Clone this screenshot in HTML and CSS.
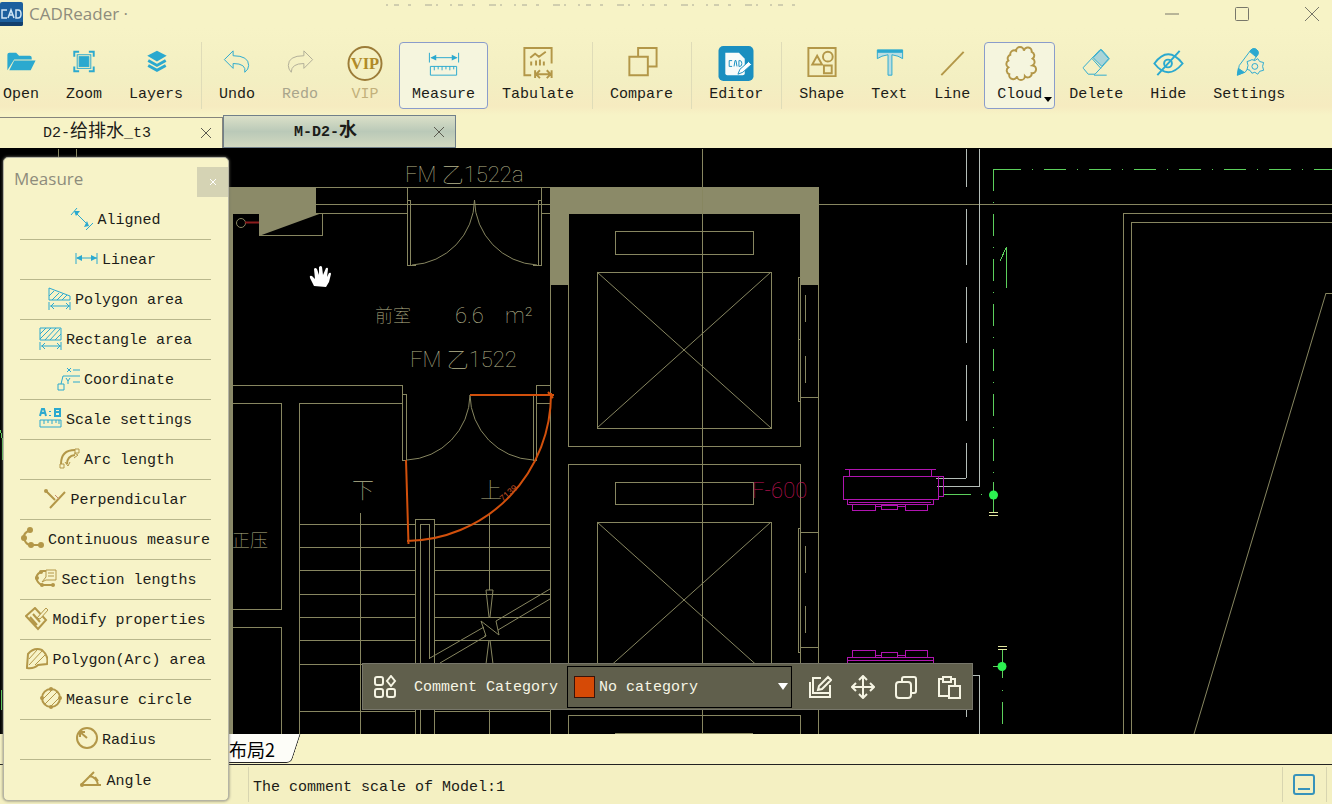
FILE: index.html
```html
<!DOCTYPE html>
<html lang="en">
<head>
    <meta charset="UTF-8">
    <meta name="viewport" content="width=device-width, initial-scale=1.0">
    <title>CADReader</title>
    <link rel="stylesheet" href="styles.css">
</head>
<body>
<div class="app">
    <header class="titlebar">
        <svg class="logo" viewBox="0 0 23 24"><rect width="23" height="24" rx="2" fill="#1c5f9e"/><path d="M0 20h23v2q0 2-2 2H0z" fill="#123f6e"/><path d="M7 8H2v8h5M8 16l3-8 3 8M9 13h4M16 8v8h2q3 0 3-4t-3-4z" fill="none" stroke="#cfe6f5" stroke-width="1.500"/></svg>
        <span class="app-name">CADReader ·</span>
        <svg class="dots" viewBox="0 0 420 2" aria-hidden="true"><path d="M2 1h418" stroke="#a9a897" stroke-width="1" stroke-dasharray="2 6 5 9 3 14 7 4 2 12"/></svg>
        <div class="window-buttons">
            <button aria-label="Minimize"><svg viewBox="0 0 16 16"><path d="M1 8h14"/></svg></button>
            <button aria-label="Maximize"><svg viewBox="0 0 16 16"><rect x="1.500" y="1.500" width="13" height="13" rx="1"/></svg></button>
            <button aria-label="Close"><svg viewBox="0 0 16 16"><path d="M1 1l14 14M15 1L1 15"/></svg></button>
        </div>
    </header>

    <nav class="toolbar">
        <button class="tool"><svg class="blue" viewBox="0 0 36 36"><path d="M4 25V9q0-2 2-2h7l3 3h11q2 0 2 2v2H11z" fill="#2ba9cf" stroke="none"/><path d="M11 15h22l-5 10H6z" fill="#2ba9cf" stroke="none"/></svg>Open</button>
        <button class="tool"><svg class="blue" viewBox="0 0 36 36"><rect x="11" y="9" width="14" height="14"/><rect x="13" y="11" width="10" height="10" fill="#2ba9cf"/><path d="M8 11V6h5M23 6h5v5M28 21v5h-5M13 26H8v-5" stroke-width="2"/></svg>Zoom</button>
        <button class="tool"><svg class="blue" viewBox="0 0 36 36"><path d="M19 5l10 5-10 6-10-6z" fill="#2ba9cf" stroke="none"/><path d="M10 15l9 5 9-5M10 20l9 5 9-5" stroke-width="3"/></svg>Layers</button>
        <span class="sep"></span>
        <button class="tool"><svg class="blue" viewBox="0 0 36 36"><path d="M5 14l9-9v5q16 0 16 10 0 4-4 7 2-9-12-9v5z"/></svg>Undo</button>
        <button class="tool muted"><svg class="grey" viewBox="0 0 36 36"><path d="M31 14l-9-9v5Q6 10 6 20q0 4 3 7 0-9 13-9v5z"/></svg>Redo</button>
        <button class="tool muted vip"><svg viewBox="0 0 36 36"><circle cx="18" cy="18" r="17" fill="none" stroke="#9c7c38" stroke-width="2"/><text x="18" y="24" class="vip-text">VIP</text></svg>VIP</button>
        <button class="tool selected"><svg class="blue" viewBox="0 0 36 36"><path d="M3 7v10M33 7v10M5 12h26M4 21h27v9H4zM8 21v4M12 21v3M16 21v4M20 21v3M24 21v4M28 21v3"/><path d="M4 12l6-3v6zM32 12l-6-3v6z" fill="#2ba9cf" stroke="none"/></svg>Measure</button>
        <button class="tool"><svg class="gold" viewBox="0 0 36 36"><path d="M11 30H4V2h28v16M15 25v8M32 25v8M17 29h13M20 25l-4 4 4 4M27 25l4 4-4 4M10 12l5-4 4 3 7-5M11 20v-4M16 20v-5M20 20v-6M24 20v-4" stroke-width="2"/></svg>Tabulate</button>
        <span class="sep"></span>
        <button class="tool"><svg class="gold" viewBox="0 0 36 36"><path d="M14 11V2h19v19h-9M5 11h19v19H5z" stroke-width="2"/></svg>Compare</button>
        <span class="sep"></span>
        <button class="tool"><svg viewBox="0 0 36 36"><rect width="36" height="36" rx="5" fill="#1a8fc0"/><path d="M7 7h14l6 6v15q0 2-2 2H9q-2 0-2-2z" fill="#f7fbfa"/><path d="M14 15h-3v6h3M16 21l1-6h1l1 6M21 15v6h1q2 0 2-3t-2-3z" fill="none" stroke="#1a8fc0"/><path d="M20 29l2-5 9-8 3 3-9 8z" fill="#fff" stroke="#1a8fc0"/></svg>Editor</button>
        <span class="sep"></span>
        <button class="tool"><svg class="gold" viewBox="0 0 36 36"><path d="M4 2h28v29H4zM13 10l5 9H8zM20 20h8v8h-8z" stroke-width="2"/><circle cx="24" cy="11" r="5" stroke-width="2"/></svg>Shape</button>
        <button class="tool"><svg class="blue" viewBox="0 0 36 36"><path d="M6 4h26v9q-4-3-11-4v21h-4V9q-7 1-11 4z" fill="#b9dde0"/><path d="M6 4h26v3H6z" fill="#2ba9cf" stroke="none"/></svg>Text</button>
        <button class="tool"><svg class="gold" viewBox="0 0 36 36"><path d="M7 30L30 6" stroke-width="2"/></svg>Line</button>
        <button class="tool selected cloud"><svg class="gold" viewBox="0 0 36 36"><path d="M8 9a4 4 0 0 1 6-4a4 4 0 0 1 8 0a4 4 0 0 1 8 1a4 4 0 0 1 1 7a4 4 0 0 1 0 7a4 4 0 0 1-1 8a4 4 0 0 1-7 3a4 4 0 0 1-8 0a4 4 0 0 1-8-2a4 4 0 0 1-1-7a4 4 0 0 1 0-7a4 4 0 0 1 2-6z" stroke-width="2"/></svg>Cloud<svg class="caret" viewBox="0 0 8 5"><path d="M0 0h8L4 5z"/></svg></button>
        <button class="tool"><svg class="blue" viewBox="0 0 36 36"><path d="M5 22L22 4q1-1 2 0l7 8q1 1 0 2L17 29h-7l-5-6zM14 13l9 10M16 30h13"/><path d="M15 12l8-8 8 9-7 8z" fill="#a9d4d8"/></svg>Delete</button>
        <button class="tool"><svg class="blue" viewBox="0 0 36 36"><path d="M4 18q14-19 29 0-15 18-29 0zM30 5L7 30" stroke-width="2"/><circle cx="18" cy="18" r="4" stroke-width="2"/></svg>Hide</button>
        <button class="tool"><svg class="blue" viewBox="0 0 36 36"><path d="M6 30l2-10L20 4q4-3 7 1 1 2 0 4L14 27z"/><path d="M20 4q4-3 7 1 1 2 0 4l-2 2-6-5zM6 30l1-7 6 4z" fill="#2ba9cf"/><path d="M21 14l3 1 3-2 2 3 4 1-1 4 1 4-4 1-2 3-3-2-3 1-2-3-3-1 1-4-1-4 3-1z" fill="#f3efca"/><circle cx="24" cy="21" r="3"/></svg>Settings</button>
    </nav>

    <div class="tabs">
        <div class="tab">
            <button class="tab-label">D2-<span class="han">给排水</span>_t3</button>
            <button class="tab-close" aria-label="Close D2-给排水_t3"><svg viewBox="0 0 12 12"><path d="M1 1l10 10M11 1L1 11"/></svg></button>
        </div>
        <div class="tab active">
            <button class="tab-label">M-D2-<span class="han">水</span></button>
            <button class="tab-close" aria-label="Close M-D2-水"><svg viewBox="0 0 12 12"><path d="M1 1l10 10M11 1L1 11"/></svg></button>
        </div>
    </div>

    <main class="canvas">
        <svg class="drawing" viewBox="0 149 1332 585" preserveAspectRatio="xMinYMin slice">
            <!-- walls -->
            <path class="wall" d="M229 187h87v26h6l-63 23v-22h-26v520h-4zM550 187h269v98h-19v-71H569v71h-19z"/>
            <g class="line crisp">
                <!-- lobby door -->
                <path d="M58.500 149v10M76.500 149v10M316 187.500h234M316 204.500h234M316 213.500h91M259 235.500h63v-22M541 213.500h9M407.500 187v78h8M407 200.500h3.500v65M541.500 187v78h-9M541 200.500h-2.500v65"/>
                <!-- grid axes -->
                <path d="M702.500 149v585M819 204.500h513"/>
                <!-- rooms on the left -->
                <path d="M233 385.500h169.500v75h4v-66h-4M233 403.500h48.500v206H233M233 627.500h48.500v107M299.500 734V403.500h103M550 385.500h-13.500v75h-3v-66M536 403.500h14"/>
                <!-- stairs -->
                <path d="M299 524.500h116M299 547.500h116M299 570.500h116M299 594.500h116M299 617.500h116M299 640.500h116M299 664.500h116M299 711.500h116M434 524.500h116M434 547.500h116M434 570.500h116M434 594.500h116M434 617.500h116M434 640.500h116M434 711.500h116"/>
                <path d="M415.500 734V519.500h19v214M420.500 734V524.500h9v134M360.500 513v221M489.500 513v77M550.500 285v449M489.500 664v70"/>
                <!-- lifts -->
                <path d="M568.500 285v161h232V285M568.500 697V464.500h232V697zM568.500 734v-18.500h232V734M818.500 285v449M615.500 231.500h138v23h-138zM615.500 482.500h138v22h-138zM615 733.500h138M597.500 272.500h174v156h-174zM597.500 522.500h174v156h-174z"/>
                <path d="M801 277.500h-2.500v124h2M798 339.500h3M801 397.500h17M805.500 295v27M805.500 356v27M801 528.500h-2.500v124h2M801 532.500h17M801 647.500h17M805.500 546v27M805.500 606v27"/>
                <!-- hall on the right -->
                <path d="M1123.500 734V213.500H1332M1131.500 734V222.500H1332M1332 293.500h-6"/>
            </g>
            <g class="line">
                <circle cx="241" cy="223" r="4.500"/>
                <path d="M474.500 200A66 66 0 0 1 412 265M474.500 200A66 66 0 0 0 537 265M470 395A66 66 0 0 1 407 460M470 395A66 66 0 0 0 533 460"/>
                <path d="M597 272l174 156M771 272L597 428M597 522l174 156M771 522L597 678"/>
                <path d="M430 658l54-31M440 663l46-27M496 621l54-32M498 630l52-31M484 636h2l-5-15 18 14-3-14M486 590h7l-3 27h-1zM489 640l-3 24M490 640l3 24M1326 293L1194 734"/>
            </g>
            <g class="pale crisp">
                <path d="M966.500 149v329" stroke-dasharray="38 22 56 22 56 22 56 22 56 22"/>
                <path d="M966 478.500h-30M979.500 149v337.500H937M973 675.500h6.500V734M966.500 710v7"/>
            </g>
            <g class="green crisp">
                <path d="M993 169.500h28M1032 169.500h1"/>
                <path d="M1044 169.500h288M993.500 169v313" stroke-dasharray="22 11 1 11"/>
                <path d="M1006.500 247v41M1000 261l6-13M943 494.500h28M981 494.500h1M993.500 482v30M1002.500 649v29M993 666.500h9M1002.500 690v1M1002.500 702v22M0 430q4 10 2 30M1.500 690v20"/>
            </g>
            <path class="bars crisp" d="M989 512.500h9M989 515.500h9M998 646.500h9M998 649.500h9"/>
            <circle class="node" cx="993.500" cy="495" r="4.500"/>
            <circle class="node" cx="1002" cy="666.500" r="4.500"/>
            <!-- fan coil units -->
            <g class="magenta crisp">
                <path d="M845 469.500h91M849.500 469v7M931.500 469v7M843.500 476.500h95v23h-95zM938.500 476.500h5v20h-5M847.500 500v4h86v-4M849 502.500h82M852.500 504.500h23v6h-23zM905.500 504.500h22v6h-22zM881.500 505.500h16v4h-16zM876 506.500h5M898 506.500h7"/>
                <path d="M852.500 650.500h23v7h-23zM905.500 650.500h22v7h-22zM881.500 652.500h16v5h-16zM876 655.500h5M898 655.500h7M847.500 664v-6.500h86v6.500M847 660.500h86M843 663.500h95"/>
            </g>
            <path d="M245 222.500h14" stroke="#8c1c1c" stroke-width="2"/>
            <!-- drawing labels -->
            <g class="labels">
                <text x="405" y="182">FM 乙1522a</text>
                <text x="410" y="367">FM 乙1522</text>
                <text x="375" y="322" class="small">前室</text>
                <text x="455" y="323">6.6</text>
                <text x="505" y="323">m²</text>
                <text x="232" y="547" class="small">正压</text>
                <text x="352" y="498">下</text>
                <text x="480" y="498">上</text>
                <text x="752" y="498" class="unit">F-600</text>
            </g>
            <!-- measured arc -->
            <path class="measured" d="M406 460l2.500 84M470 395h84M551 393A146 147 0 0 1 407 541M548 392l5 6"/>
            <text class="arc-value" transform="translate(503 502) rotate(-42)">7139</text>
            <!-- pan cursor -->
            <path d="M314 286l-4-8q-1-3 2-2l3 3-1-10q1-2 3 0l2 6v-8q2-2 3 0l1 8 3-7q2-1 2 1l-1 8 2-4q2-1 2 1l-2 8-3 5z" fill="#fff"/>
        </svg>

        <div class="comment-bar">
            <button aria-label="Categories"><svg viewBox="0 0 24 24"><rect x="2" y="2" width="8" height="8" rx="2"/><rect x="2" y="14" width="8" height="8" rx="2"/><rect x="14" y="14" width="8" height="8" rx="2"/><path d="M18 1l4 5-4 5-4-5z"/></svg></button>
            <label for="category">Comment Category</label>
            <div class="select-box">
                <span class="swatch"></span>
                <select id="category"><option>No category</option></select>
                <svg class="arrow" viewBox="0 0 10 7"><path d="M0 0h10L5 7z"/></svg>
            </div>
            <button aria-label="Edit"><svg viewBox="0 0 24 24"><path d="M13 3H5v15h17v-8M2 7v15h20v-4M20 2l3 3-9 9-4 1 1-4z"/></svg></button>
            <button aria-label="Move"><svg viewBox="0 0 24 24"><path d="M12 2v20M2 12h20M8 5l4-4 4 4M8 19l4 4 4-4M5 8l-4 4 4 4M19 8l4 4-4 4"/></svg></button>
            <button aria-label="Copy"><svg viewBox="0 0 24 24"><rect x="2" y="7" width="15" height="16" rx="3"/><path d="M8 7V4q0-2 2-2h10q2 0 2 2v12q0 2-2 2h-3"/></svg></button>
            <button aria-label="Paste"><svg viewBox="0 0 24 24"><path d="M12 21H2V4h4M14 4h4v7M6 2h8v5H6zM12 11h11v12H12z"/></svg></button>
        </div>
    </main>

    <div class="layout-tabs">
        <button class="layout-tab">布局2</button>
    </div>

    <footer class="statusbar">
        <span class="status-text">The comment scale of Model:1</span>
        <button class="status-button" aria-label="Command window"><svg viewBox="0 0 22 22"><rect x="1" y="1" width="20" height="19" rx="2"/><path d="M5 15h12"/></svg></button>
    </footer>

    <aside class="measure-panel">
        <div class="panel-head">
            <h2>Measure</h2>
            <button class="panel-close" aria-label="Close panel"><svg viewBox="0 0 8 8"><path d="M1 1l6 6M7 1L1 7"/></svg></button>
        </div>
        <ul>
            <li><button><svg class="blue" viewBox="0 0 23 24"><path d="M1 8l6-7M16 23l7-7M5 5l13 13"/><path d="M4 4h6l-4 5zM19 19l-5 1 3-6z" fill="#2ba9cf" stroke="none"/></svg>Aligned</button></li>
            <li><button><svg class="blue" viewBox="0 0 23 24"><path d="M1 6v11M22 6v11M2 11h20"/><path d="M1 11l6-3v6zM22 11l-6-3v6z" fill="#2ba9cf" stroke="none"/></svg>Linear</button></li>
            <li><button><svg class="blue" viewBox="0 0 23 24"><path d="M1 1l21 8v4H1zM1 9l5-5M4 13l7-7M9 13l6-6M14 13l5-5M1 15v8M22 15v8M2 19h20M6 16l-3 3 3 3M18 16l3 3-3 3"/></svg>Polygon area</button></li>
            <li><button><svg class="blue" viewBox="0 0 23 24"><path d="M1 1h21v12H1zM1 7l6-6M1 12L12 1M6 13L17 1M11 13L21 2M16 13l6-6M1 15v8M22 15v8M2 19h20M6 16l-3 3 3 3M18 16l3 3-3 3"/></svg>Rectangle area</button></li>
            <li><button><svg class="blue" viewBox="0 0 23 24"><path d="M10 1l4 4M14 1l-4 4M16 3h7M4 17l2-8h17M9 11l2 3 2-3M11 14v3M16 15h7M1 17h6v6H1z"/></svg>Coordinate</button></li>
            <li><button><svg class="blue" viewBox="0 0 23 24"><path d="M1 9l2-7h2l2 7M2 6h4M16 2h5v7h-5zM16 5h5M11 4v1M11 8v1" stroke-width="2"/><path d="M1 13h21v7H1zM5 13v4M9 13v3M13 13v4M17 13v3M20 13v4"/></svg>Scale settings</button></li>
            <li><button><svg class="gold" viewBox="0 0 23 24"><path d="M4 17Q4 3 18 3M10 17q0-8 8-9" stroke-width="2"/><path d="M3 17h4v4H3zM18 2h4v4h-4zM8 15l3 4 2-4M17 6l4 2-4 3"/></svg>Arc length</button></li>
            <li><button><svg class="gold" viewBox="0 0 23 24"><path d="M3 4l9 9M22 5L7 21" stroke-width="2"/><path d="M12 8l4 4" stroke="#c98a6a"/><circle cx="3" cy="4" r="2" class="dot"/></svg>Perpendicular</button></li>
            <li><button><svg class="gold" viewBox="0 0 23 24"><path d="M9 3Q0 7 4 14q2 4 6 4h10" stroke-width="2"/><circle cx="9" cy="3" r="3" class="dot"/><circle cx="3" cy="11" r="3" class="dot"/><circle cx="10" cy="18" r="3" class="dot"/><circle cx="20" cy="18" r="3" class="dot"/></svg>Continuous measure</button></li>
            <li><button><svg class="gold" viewBox="0 0 23 24"><path d="M12 4H9q-6 2-7 7 2 6 6 7h12" stroke-width="2"/><path d="M12 3h10v10H12l-4 2 4-5zM14 6h6M14 9h6"/><circle cx="7" cy="5" r="2" class="dot"/><circle cx="3" cy="11" r="2" class="dot"/><circle cx="8" cy="18" r="2" class="dot"/><circle cx="19" cy="18" r="2" class="dot"/></svg>Section lengths</button></li>
            <li><button><svg class="gold" viewBox="0 0 23 24"><path d="M1 9l9-8 11 12-8 9zM5 10l7 8M8 7l7 8" stroke-width="2"/><path d="M12 11l9-10 2 2-8 9z" fill="#f6f2c8"/></svg>Modify properties</button></li>
            <li><button><svg class="gold" viewBox="0 0 23 24"><path d="M2 20L3 7q6-7 14-4 7 6 5 14l-9 1q-4 4-11 3z" stroke-width="2"/><path d="M4 12l8-9M4 18L17 4M10 18L21 7"/></svg>Polygon(Arc) area</button></li>
            <li><button><svg class="gold" viewBox="0 0 23 24"><circle cx="12" cy="11" r="9" stroke-width="2"/><path d="M4 12l9-9M6 17L18 5M11 20l9-9"/><circle cx="12" cy="2" r="2" class="dot"/><circle cx="3" cy="11" r="2" class="dot"/><circle cx="21" cy="11" r="2" class="dot"/><circle cx="12" cy="20" r="2" class="dot"/></svg>Measure circle</button></li>
            <li><button><svg class="gold" viewBox="0 0 23 24"><circle cx="12" cy="11" r="10" stroke-width="2"/><path d="M12 11L5 5M5 10V5h5" stroke-width="2"/></svg>Radius</button></li>
            <li><button><svg class="gold" viewBox="0 0 23 24"><path d="M2 17h20M2 17L15 4M10 8q8 1 9 9M16 9l3 4" stroke-width="2"/><circle cx="3" cy="17" r="2" class="dot"/></svg>Angle</button></li>
        </ul>
    </aside>
</div>
</body>
</html>
```
FILE: styles.css
```css
* {
    box-sizing: border-box;
}

body {
    margin: 0;
    font-family: "Liberation Mono", "Noto Sans CJK SC", monospace;
    font-size: 15px;
    line-height: 20px;
    color: #1c1c18;
    background-color: #f7f3c6;
}

button {
    margin: 0;
    padding: 0;
    border: none;
    background: none;
    font: inherit;
    color: inherit;
    cursor: pointer;
}

svg {
    display: block;
}

.app {
    position: relative;
    display: flex;
    flex-direction: column;
    height: 100vh;
    overflow: hidden;
}

.blue {
    fill: none;
    stroke: #2ba9cf;
}

.gold {
    fill: none;
    stroke: #b39748;
}

.grey {
    fill: none;
    stroke: #b1ad98;
}

.dot {
    fill: #b39748;
    stroke: none;
}

/* title bar */
.titlebar {
    display: flex;
    align-items: center;
    height: 28px;
}

.logo {
    width: 23px;
    height: 24px;
}

.app-name {
    margin-left: 6px;
    font-family: "Open Sans", sans-serif;
    font-size: 17px;
    color: #8e8c7c;
}

.dots {
    width: 420px;
    height: 2px;
    margin: 4px auto 0 256px;
    align-self: flex-start;
}

.window-buttons {
    display: flex;
    gap: 54px;
    padding-right: 12px;
}

.window-buttons svg {
    width: 16px;
    height: 16px;
    fill: none;
    stroke: #78776a;
}

/* toolbar */
.toolbar {
    display: flex;
    gap: 1px;
    margin-left: -10px;
    padding: 14px 0 6px;
    background: linear-gradient(#f7f3c6, #f3efc2 60%, #f6ebc0 90%, #f7f3c6);
}

.tool {
    display: flex;
    flex-direction: column;
    align-items: center;
    gap: 4px;
    height: 67px;
    padding: 3px 12px;
    border: 1px solid transparent;
    border-radius: 4px;
}

.tool > svg {
    width: 36px;
    height: 36px;
}

.tool.selected {
    border-color: #8a9ccb;
    background-color: #f5f5de;
}

.tool.muted {
    color: #a9a58c;
}

.tool.vip {
    width: 66px;
    color: #c2b07a;
}

.vip-text {
    font-family: "Liberation Serif", serif;
    font-size: 17px;
    font-weight: bold;
    text-anchor: middle;
    fill: #b08a28;
}

.tool.cloud {
    position: relative;
}

.tool > .caret {
    position: absolute;
    right: 2px;
    bottom: 6px;
    width: 8px;
    height: 5px;
}

.sep {
    width: 1px;
    margin: 0 3px 0 4px;
    background-color: #dfdcb8;
}

/* document tabs */
.tabs {
    display: flex;
    align-items: flex-end;
    height: 34px;
    border-bottom: 1px solid #000;
}

.tab {
    display: flex;
    align-items: center;
    width: 223px;
    height: 31px;
    padding-right: 4px;
    border-top: 1px solid #85857c;
    border-right: 1px solid #85857c;
}

.tab.active {
    width: 233px;
    height: 33px;
    border: 1px solid #71808a;
    background: linear-gradient(#dbe0c8, #bac9b8 50%, #d2d9c0);
    font-weight: bold;
}

.tab-label {
    flex: 1;
}

.han {
    font-size: 18px;
}

.tab-close {
    display: flex;
    justify-content: center;
    width: 24px;
}

.tab-close svg {
    width: 12px;
    height: 12px;
    stroke: #5c5b50;
    stroke-width: 1;
}

/* drawing */
.canvas {
    position: relative;
    flex: 1;
    min-height: 0;
    background-color: #000;
}

.drawing {
    width: 100%;
    height: 100%;
    fill: none;
}

.crisp {
    shape-rendering: crispEdges;
}

.wall {
    fill: #8b8a68;
}

.line {
    stroke: #878660;
}

.pale {
    stroke: #b4bdb8;
}

.green {
    stroke: #5cd05c;
}

.bars {
    stroke: #e4e8a0;
}

.node {
    fill: #2cf050;
}

.magenta {
    stroke: #b014b0;
}

.labels {
    font-family: Roboto, "Noto Sans CJK SC", sans-serif;
    font-size: 22px;
    font-weight: 100;
    fill: #b5b48c;
}

.small {
    font-size: 18px;
}

.unit {
    fill: #c8145a;
}

.measured {
    stroke: #d2500c;
    stroke-width: 2;
}

.arc-value {
    font-family: "Liberation Sans", sans-serif;
    font-size: 9px;
    fill: #c04c20;
}

/* floating comment bar */
.comment-bar {
    position: absolute;
    left: 362px;
    bottom: 24px;
    display: flex;
    align-items: center;
    gap: 19px;
    height: 47px;
    padding: 0 11px 0 10px;
    border: 1px solid #77766a;
    background-color: #605f4c;
    color: #f6f5e4;
}

.comment-bar button svg {
    width: 24px;
    height: 24px;
    fill: none;
    stroke: #f6f5e4;
    stroke-width: 2;
}

.comment-bar label {
    margin: 0 -10px 0 -2px;
    padding-top: 3px;
}

.select-box {
    position: relative;
    width: 225px;
    height: 42px;
    margin-right: -3px;
}

.select-box select {
    width: 100%;
    height: 100%;
    padding: 2px 24px 0 31px;
    border: 1px solid #000;
    border-radius: 0;
    background: none;
    font: inherit;
    color: inherit;
    appearance: none;
}

.swatch {
    position: absolute;
    left: 7px;
    top: 10px;
    width: 21px;
    height: 22px;
    border: 1px solid #38130a;
    background-color: #d64a06;
}

.arrow {
    position: absolute;
    right: 4px;
    top: 17px;
    width: 10px;
    height: 7px;
    fill: #fff;
    pointer-events: none;
}

/* layout tabs */
.layout-tabs {
    display: flex;
    height: 31px;
    padding-left: 200px;
    border-bottom: 1px solid #222;
}

.layout-tab {
    position: relative;
    z-index: 0;
    padding: 0 22px 0 29px;
    font-family: "Noto Sans CJK SC", sans-serif;
    font-size: 18px;
    color: #000;
}

.layout-tab::before {
    content: "";
    position: absolute;
    z-index: -1;
    inset: 0 1px 1px 0;
    border-right: 1px solid #222;
    border-bottom: 1px solid #222;
    border-bottom-right-radius: 5px;
    background-color: #fdfdf8;
    transform: skewX(-18deg);
}

/* status bar */
.statusbar {
    display: flex;
    justify-content: space-between;
    height: 39px;
    padding: 2px 5px 2px 248px;
    background-color: #f4f0c2;
}

.status-text {
    padding: 11px 4px 0;
    border-left: 1px solid #d8d5b0;
}

.status-button {
    padding: 0 11px 0 10px;
    border-left: 1px solid #d8d5b0;
    border-right: 1px solid #d8d5b0;
}

.status-button svg {
    width: 22px;
    height: 22px;
    fill: none;
    stroke: #3793bb;
    stroke-width: 2;
}

/* measure panel */
.measure-panel {
    position: absolute;
    left: 3px;
    top: 157px;
    width: 226px;
    border: 1px solid #b5b4a4;
    border-radius: 5px;
    background-color: #f7f3c8;
    box-shadow: 0 0 3px #77766a;
}

.panel-head {
    display: flex;
    justify-content: space-between;
    align-items: center;
    height: 42px;
    padding-left: 10px;
}

.panel-head h2 {
    margin: 0;
    font-family: "Open Sans", sans-serif;
    font-size: 17px;
    font-weight: normal;
    color: #8e8c7c;
}

.panel-close {
    display: flex;
    align-items: center;
    justify-content: center;
    width: 31px;
    height: 30px;
    margin-top: 6px;
    background-color: #d5d3b4;
}

.panel-close svg {
    width: 8px;
    height: 8px;
    stroke: #fff;
}

.measure-panel ul {
    margin: 0;
    padding: 0 17px 0 16px;
    list-style: none;
}

.measure-panel li {
    height: 40px;
    border-bottom: 1px solid #b9b78c;
}

.measure-panel li:last-child {
    border-bottom: none;
}

.measure-panel li button {
    display: flex;
    align-items: center;
    justify-content: center;
    gap: 4px;
    width: 100%;
    height: 100%;
    padding-top: 3px;
    white-space: nowrap;
}

.measure-panel li svg {
    width: 23px;
    height: 24px;
    margin-bottom: 4px;
}
```
